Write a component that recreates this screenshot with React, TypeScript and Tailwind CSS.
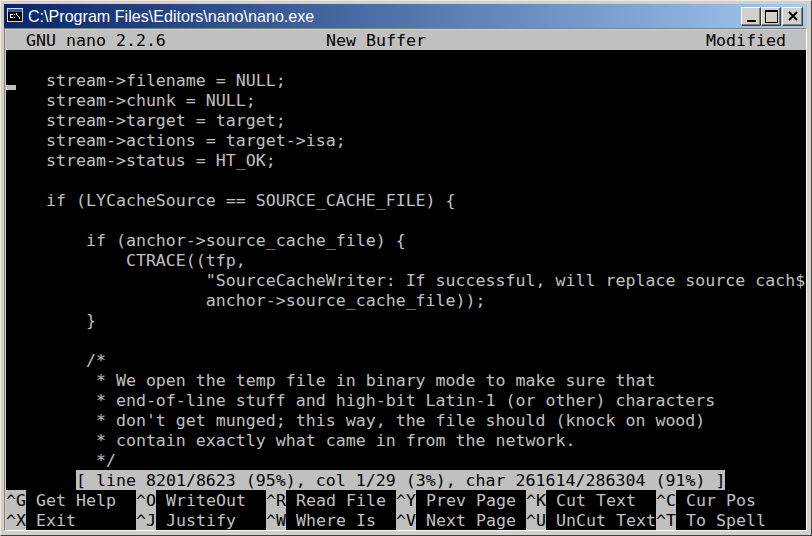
const code = [
  '',
  '  stream->filename = NULL;',
  '  stream->chunk = NULL;',
  '  stream->target = target;',
  '  stream->actions = target->isa;',
  '  stream->status = HT_OK;',
  '',
  '  if (LYCacheSource == SOURCE_CACHE_FILE) {',
  '',
  '      if (anchor->source_cache_file) {',
  '          CTRACE((tfp,',
  '                  "SourceCacheWriter: If successful, will replace source cach$',
  '                  anchor->source_cache_file));',
  '      }',
  '',
  '      /*',
  '       * We open the temp file in binary mode to make sure that',
  '       * end-of-line stuff and high-bit Latin-1 (or other) characters',
  "       * don't get munged; this way, the file should (knock on wood)",
  '       * contain exactly what came in from the network.',
  '       */',
]

const shortcutsTop = [
  ['^G', 'Get Help'],
  ['^O', 'WriteOut'],
  ['^R', 'Read File'],
  ['^Y', 'Prev Page'],
  ['^K', 'Cut Text'],
  ['^C', 'Cur Pos'],
]

const shortcutsBottom = [
  ['^X', 'Exit'],
  ['^J', 'Justify'],
  ['^W', 'Where Is'],
  ['^V', 'Next Page'],
  ['^U', 'UnCut Text'],
  ['^T', 'To Spell'],
]

function ShortcutRow({ items }: { items: string[][] }) {
  return (
    <div className="flex h-5">
      {items.map(([key, label]) => (
        <div key={key} className="flex w-[130px]">
          <span className="h-5 w-5 shrink-0 bg-[#c0c0c0] text-black">{key}</span>
          <span className="pl-2.5">{label}</span>
        </div>
      ))}
    </div>
  )
}

function ConsoleIcon() {
  return (
    <svg width="16" height="14" viewBox="0 0 16 14" className="mb-[2px] shrink-0">
      <rect x="0" y="0" width="16" height="14" fill="#d8d8d8" />
      <rect x="1" y="1" width="14" height="3" fill="#1f5fc4" />
      <rect x="1" y="4" width="14" height="9" fill="#000000" />
      <path d="M3 6h3v1H3zM3 9h3v1H3zM3 7h1v2H3zM7 6h1v1H7zM7 9h1v1H7zM9 5h1v2H9zM10 7h1v1H10zM11 8h1v1H11zM12 9h1v2H12z" fill="#f0f0f0" />
    </svg>
  )
}

function WinButton({ children, wide }: { children: React.ReactNode; wide?: boolean }) {
  return (
    <div
      className={`flex h-[19px] items-center justify-center border border-t-white border-l-white border-r-[#404040] border-b-[#404040] bg-[#d4d0c8] shadow-[inset_-1px_-1px_0_#808080] ${wide ? 'w-[21px]' : 'w-5'}`}
    >
      {children}
    </div>
  )
}

export default function App() {
  return (
    <div className="h-[536px] w-[812px] overflow-hidden border border-t-[#ece9e0] border-l-[#ece9e0] border-r-[#404040] border-b-[#404040] bg-[#d4d0c8] pt-[3px] pl-[3px] pr-1">
      {/* title bar */}
      <div className="flex h-6 items-center bg-gradient-to-r from-[#0a246a] to-[#a6caf0] pl-[3px] pr-1 font-['Liberation_Sans',sans-serif] text-[16.1px] text-white">
        <ConsoleIcon />
        <span className="ml-[5px] leading-none">C:\Program Files\Editors\nano\nano.exe</span>
        <div className="ml-auto flex items-center">
          <WinButton>
            <span className="mt-[9px] h-[2px] w-[9px] bg-black" />
          </WinButton>
          <WinButton>
            <span className="h-[13px] w-[13px] border border-t-2 border-black" />
          </WinButton>
          <div className="ml-[1px]">
            <WinButton wide>
              <svg width="10" height="10" viewBox="0 0 10 10">
                <path d="M1 1l8 8M9 1l-8 8" stroke="#000000" strokeWidth="2" />
              </svg>
            </WinButton>
          </div>
        </div>
      </div>

      {/* console */}
      <div className="relative w-[803px] border border-t-[#808080] border-l-[#808080] border-r-white border-b-white font-['DejaVu_Sans_Mono',monospace] text-[16.6px] leading-[22px] whitespace-pre text-[#c0c0c0]">
        <div className="ml-[1px] mt-[1px] w-[800px] bg-black">
          <div className="relative flex h-5 bg-[#c0c0c0] text-black">
            <span className="pl-5">GNU nano 2.2.6</span>
            <span className="absolute left-[320px]">New Buffer</span>
            <span className="absolute left-[700px]">Modified</span>
          </div>
          <div className="h-[420px] pl-5">
            {code.map((line, i) => (
              <div key={i} className="h-5">
                {line}
              </div>
            ))}
          </div>
          <div className="flex h-5 pl-[70px]">
            <span className="h-5 bg-[#c0c0c0] text-black">[ line 8201/8623 (95%), col 1/29 (3%), char 261614/286304 (91%) ]</span>
          </div>
          <ShortcutRow items={shortcutsTop} />
          <ShortcutRow items={shortcutsBottom} />
        </div>
        {/* cursor */}
        <span className="absolute left-[1px] top-[56px] h-[5px] w-2.5 bg-[#c0c0c0]" />
      </div>
    </div>
  )
}
